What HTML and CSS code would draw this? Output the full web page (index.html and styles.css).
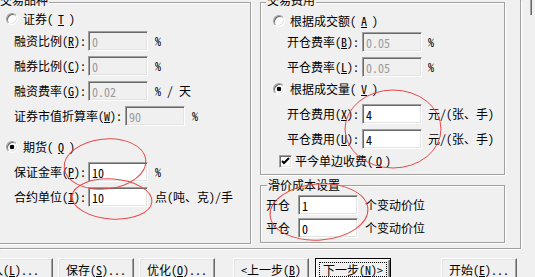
FILE: index.html
```html
<!DOCTYPE html>
<html lang="zh-CN">
  <head>
    <meta charset="UTF-8">
    <meta name="viewport" content="width=device-width, initial-scale=1.0">
    <title>交易设置</title>
    <link rel="stylesheet" href="styles.css">
  </head>
  <body>
    <div class="dialog">
      <div class="sheet">
        <section class="group group--instrument">
          <h2 class="group__title">交易品种</h2>
          <div class="choice">
            <span class="choice__radio"></span>证券(<u>T</u>)
          </div>
          <div class="field">
            <span class="field__label">融资比例(<u>R</u>):</span>
            <input class="field__input" value="0" disabled>
            <span class="field__unit">%</span>
          </div>
          <div class="field">
            <span class="field__label">融券比例(<u>C</u>):</span>
            <input class="field__input" value="0" disabled>
            <span class="field__unit">%</span>
          </div>
          <div class="field">
            <span class="field__label">融资费率(<u>G</u>):</span>
            <input class="field__input" value="0.02" disabled>
            <span class="field__unit">% / 天</span>
          </div>
          <div class="field">
            <span class="field__label field__label--wide">证券市值折算率(<u>W</u>):</span>
            <input class="field__input" value="90" disabled>
            <span class="field__unit">%</span>
          </div>
          <div class="choice choice--futures">
            <span class="choice__radio choice__radio--on"></span>期货(<u>Q</u>)
          </div>
          <div class="field field--after-choice">
            <span class="field__label">保证金率(<u>P</u>):</span>
            <input class="field__input" value="10">
            <span class="field__unit">%</span>
          </div>
          <div class="field">
            <span class="field__label">合约单位(<u>I</u>):</span>
            <input class="field__input" value="10">
            <span class="field__unit">点(吨、克)/手</span>
          </div>
        </section>

        <div class="side">
          <section class="group group--fees">
            <h2 class="group__title">交易费用</h2>
            <div class="choice">
              <span class="choice__radio"></span>根据成交额(<u>A</u>)
            </div>
            <div class="field field--tight">
              <span class="field__label">开仓费率(<u>B</u>):</span>
              <input class="field__input" value="0.05" disabled>
              <span class="field__unit field__unit--near">%</span>
            </div>
            <div class="field">
              <span class="field__label">平仓费率(<u>L</u>):</span>
              <input class="field__input" value="0.05" disabled>
              <span class="field__unit field__unit--near">%</span>
            </div>
            <div class="choice choice--volume">
              <span class="choice__radio choice__radio--on"></span>根据成交量(<u>V</u>)
            </div>
            <div class="field field--after-choice">
              <span class="field__label">开仓费用(<u>X</u>):</span>
              <input class="field__input" value="4">
              <span class="field__unit field__unit--near">元/(张、手)</span>
            </div>
            <div class="field">
              <span class="field__label">平仓费用(<u>U</u>):</span>
              <input class="field__input" value="4">
              <span class="field__unit field__unit--near">元/(张、手)</span>
            </div>
            <div class="check">
              <span class="check__box">
                <svg width="11" height="11" viewBox="0 0 11 11">
                  <path d="M2 5 L4 7 L9 2" fill="none" stroke="#000" stroke-width="2"/>
                </svg>
              </span>平今单边收费(<u>O</u>)
            </div>
          </section>

          <section class="group group--slip">
            <h2 class="group__title">滑价成本设置</h2>
            <div class="field field--first">
              <span class="field__label">开仓</span>
              <input class="field__input" value="1">
              <span class="field__unit">个变动价位</span>
            </div>
            <div class="field field--slip">
              <span class="field__label">平仓</span>
              <input class="field__input" value="0">
              <span class="field__unit">个变动价位</span>
            </div>
          </section>
        </div>
      </div>

      <div class="buttons">
        <button class="button button--load">入(<u>L</u>)...</button>
        <button class="button">保存(<u>S</u>)...</button>
        <button class="button">优化(<u>O</u>)...</button>
        <button class="button button--prev">&lt;上一步(<u>B</u>)</button>
        <button class="button button--next button--default">
          <span class="button__focus">下一步(<u>N</u>)&gt;</span>
        </button>
        <button class="button button--start">开始(<u>E</u>)...</button>
      </div>

      <div class="dialog__edge"></div>

      <svg class="marks" width="535" height="277" viewBox="0 0 535 277">
        <ellipse cx="105" cy="164" rx="41" ry="25" transform="rotate(-6 105 164)"/>
        <ellipse cx="112" cy="199" rx="40" ry="20" transform="rotate(4 112 199)"/>
        <ellipse cx="393" cy="129" rx="48" ry="39"/>
        <ellipse cx="319" cy="212" rx="49" ry="28" transform="rotate(-4 319 212)"/>
      </svg>
    </div>
  </body>
</html>
```

FILE: styles.css
```css
:root {
  --face: #f0f0f0;
  --light: #fff;
  --soft: #e3e3e3;
  --shadow: #a0a0a0;
  --dark: #696969;
  --ink: #000;
  --ink-off: #9a9a9a;
  --mark: #e84848;

  --ui-font: "Noto Sans Mono CJK SC", "Noto Sans CJK SC", sans-serif;
}

*, *::before, *::after {
  box-sizing: border-box;
}

html, body {
  margin: 0;
  padding: 0;
  background: var(--face);
}

body {
  font-family: var(--ui-font);
  font-size: 12px;
  line-height: 14px;
  color: var(--ink);
  overflow: hidden;
}

u {
  text-decoration: underline;
  text-underline-offset: 1px;
}

.dialog {
  position: relative;
  width: 535px;
  height: 277px;
  overflow: hidden;
}

/* the property sheet area, only its right and bottom edges show */
.sheet {
  display: flex;
  align-items: flex-start;
  width: 521px;
  height: 249px;
  padding-top: 2px;
  border-right: 1px solid var(--shadow);
  border-bottom: 1px solid var(--shadow);
  box-shadow: 1px 1px 0 var(--light);
}

.dialog__edge {
  position: absolute;
  top: 0;
  left: 531px;
  width: 1px;
  height: 15px;
  background: var(--dark);
  box-shadow: -1px 0 0 var(--shadow);
}

/* etched group boxes */
.group {
  position: relative;
  flex: none;
  border: 1px solid var(--shadow);
  box-shadow: inset 1px 1px 0 var(--light), 1px 1px 0 var(--light);
}

.group__title {
  position: absolute;
  top: -10px;
  left: 5px;
  margin: 0;
  padding: 0 1px;
  background: var(--face);
  font-size: 12px;
  font-weight: normal;
  line-height: 14px;
  white-space: nowrap;
}

.group--instrument {
  margin-left: -6px;
  width: 257px;
  height: 242px;
  padding: 9px 0 0 11px;
}
.group--instrument .group__title {
  left: 4px;
}

.side {
  display: flex;
  flex-direction: column;
  margin-left: 9px;
  width: 245px;
}

.group--fees {
  height: 173px;
  padding: 11px 0 0 12px;
}

.group--slip {
  margin-top: 10px;
  height: 58px;
  padding: 9px 0 0 5px;
}
.group--slip .group__title {
  top: -8px;
  left: 6px;
}

/* radio rows */
.choice {
  display: flex;
  align-items: center;
  gap: 5px;
  height: 14px;
  white-space: nowrap;
}
.choice--futures {
  margin-top: 14px;
}
.choice--volume {
  margin-top: 5px;
}

.choice__radio {
  display: block;
  flex: none;
  width: 12px;
  height: 12px;
  border-radius: 50%;
  border: 1px solid;
  border-color: var(--shadow) var(--light) var(--light) var(--shadow);
  background: var(--light);
  box-shadow: inset 1px 1px 0 var(--dark), inset -1px -1px 0 var(--soft);
}
.choice__radio--on {
  background: radial-gradient(circle, var(--ink) 0 2px, var(--light) 2.6px);
}

/* label + edit box rows */
.field {
  display: flex;
  align-items: center;
  height: 20px;
  margin-top: 5px;
  padding-left: 8px;
  white-space: pre;
}
.field--after-choice {
  margin-top: 8px;
}
.field--tight {
  margin-top: 4px;
}
.group--fees .field {
  padding-left: 14px;
}
.group--slip .field {
  padding-left: 0;
}
.field--first {
  margin-top: 0;
}
.field--slip {
  margin-top: 3px;
}

.field__label {
  flex: none;
  width: 74px;
}
.field__label--wide {
  width: 111px;
}
.group--fees .field__label {
  width: 75px;
}
.group--slip .field__label {
  width: 32px;
}

.field__input {
  flex: none;
  width: 60px;
  height: 20px;
  margin: 0;
  padding: 1px 3px 0;
  font-family: var(--ui-font);
  font-size: 12px;
  line-height: 14px;
  color: var(--ink);
  background: var(--light);
  border: 1px solid;
  border-color: var(--shadow) var(--light) var(--light) var(--shadow);
  box-shadow: inset 1px 1px 0 var(--dark), inset -1px -1px 0 var(--soft);
  outline: none;
}
.field__input:disabled {
  color: var(--ink-off);
  background: var(--face);
}

.field__unit {
  margin-left: 7px;
}
.field__unit--near {
  margin-left: 6px;
}

/* checkbox row */
.check {
  display: flex;
  align-items: center;
  gap: 3px;
  height: 14px;
  margin: 5px 0 0 6px;
  white-space: nowrap;
}

.check__box {
  display: flex;
  align-items: center;
  justify-content: center;
  flex: none;
  width: 13px;
  height: 13px;
  border: 1px solid;
  border-color: var(--shadow) var(--light) var(--light) var(--shadow);
  background: var(--light);
  box-shadow: inset 1px 1px 0 var(--dark), inset -1px -1px 0 var(--soft);
}

/* bottom command buttons */
.buttons {
  display: flex;
  margin-top: 9px;
}

.button {
  display: flex;
  align-items: center;
  justify-content: center;
  flex: none;
  width: 76px;
  height: 23px;
  margin: 0 0 0 5px;
  padding: 0;
  font-family: var(--ui-font);
  font-size: 12px;
  line-height: 14px;
  color: var(--ink);
  white-space: nowrap;
  background: var(--face);
  border: 1px solid;
  border-color: var(--light) var(--dark) var(--dark) var(--light);
  box-shadow: inset -1px -1px 0 var(--shadow), inset 1px 1px 0 var(--soft);
}
.button--load {
  margin-left: -23px;
}
.button--prev {
  margin-left: 18px;
}
.button--next {
  margin-left: 6px;
}
.button--start {
  margin-left: 50px;
}
.button--default {
  border-color: var(--ink);
  box-shadow: inset 1px 1px 0 var(--light), inset -1px -1px 0 var(--dark), inset -2px -2px 0 var(--shadow);
  align-items: stretch;
  padding: 3px;
}

.button__focus {
  display: flex;
  align-items: center;
  justify-content: center;
  flex: 1;
  border: 1px dotted var(--ink);
}

/* red hand-drawn annotation rings */
.marks {
  position: absolute;
  top: 0;
  left: 0;
  pointer-events: none;
}
.marks ellipse {
  fill: none;
  stroke: var(--mark);
  stroke-width: 1;
}
```
